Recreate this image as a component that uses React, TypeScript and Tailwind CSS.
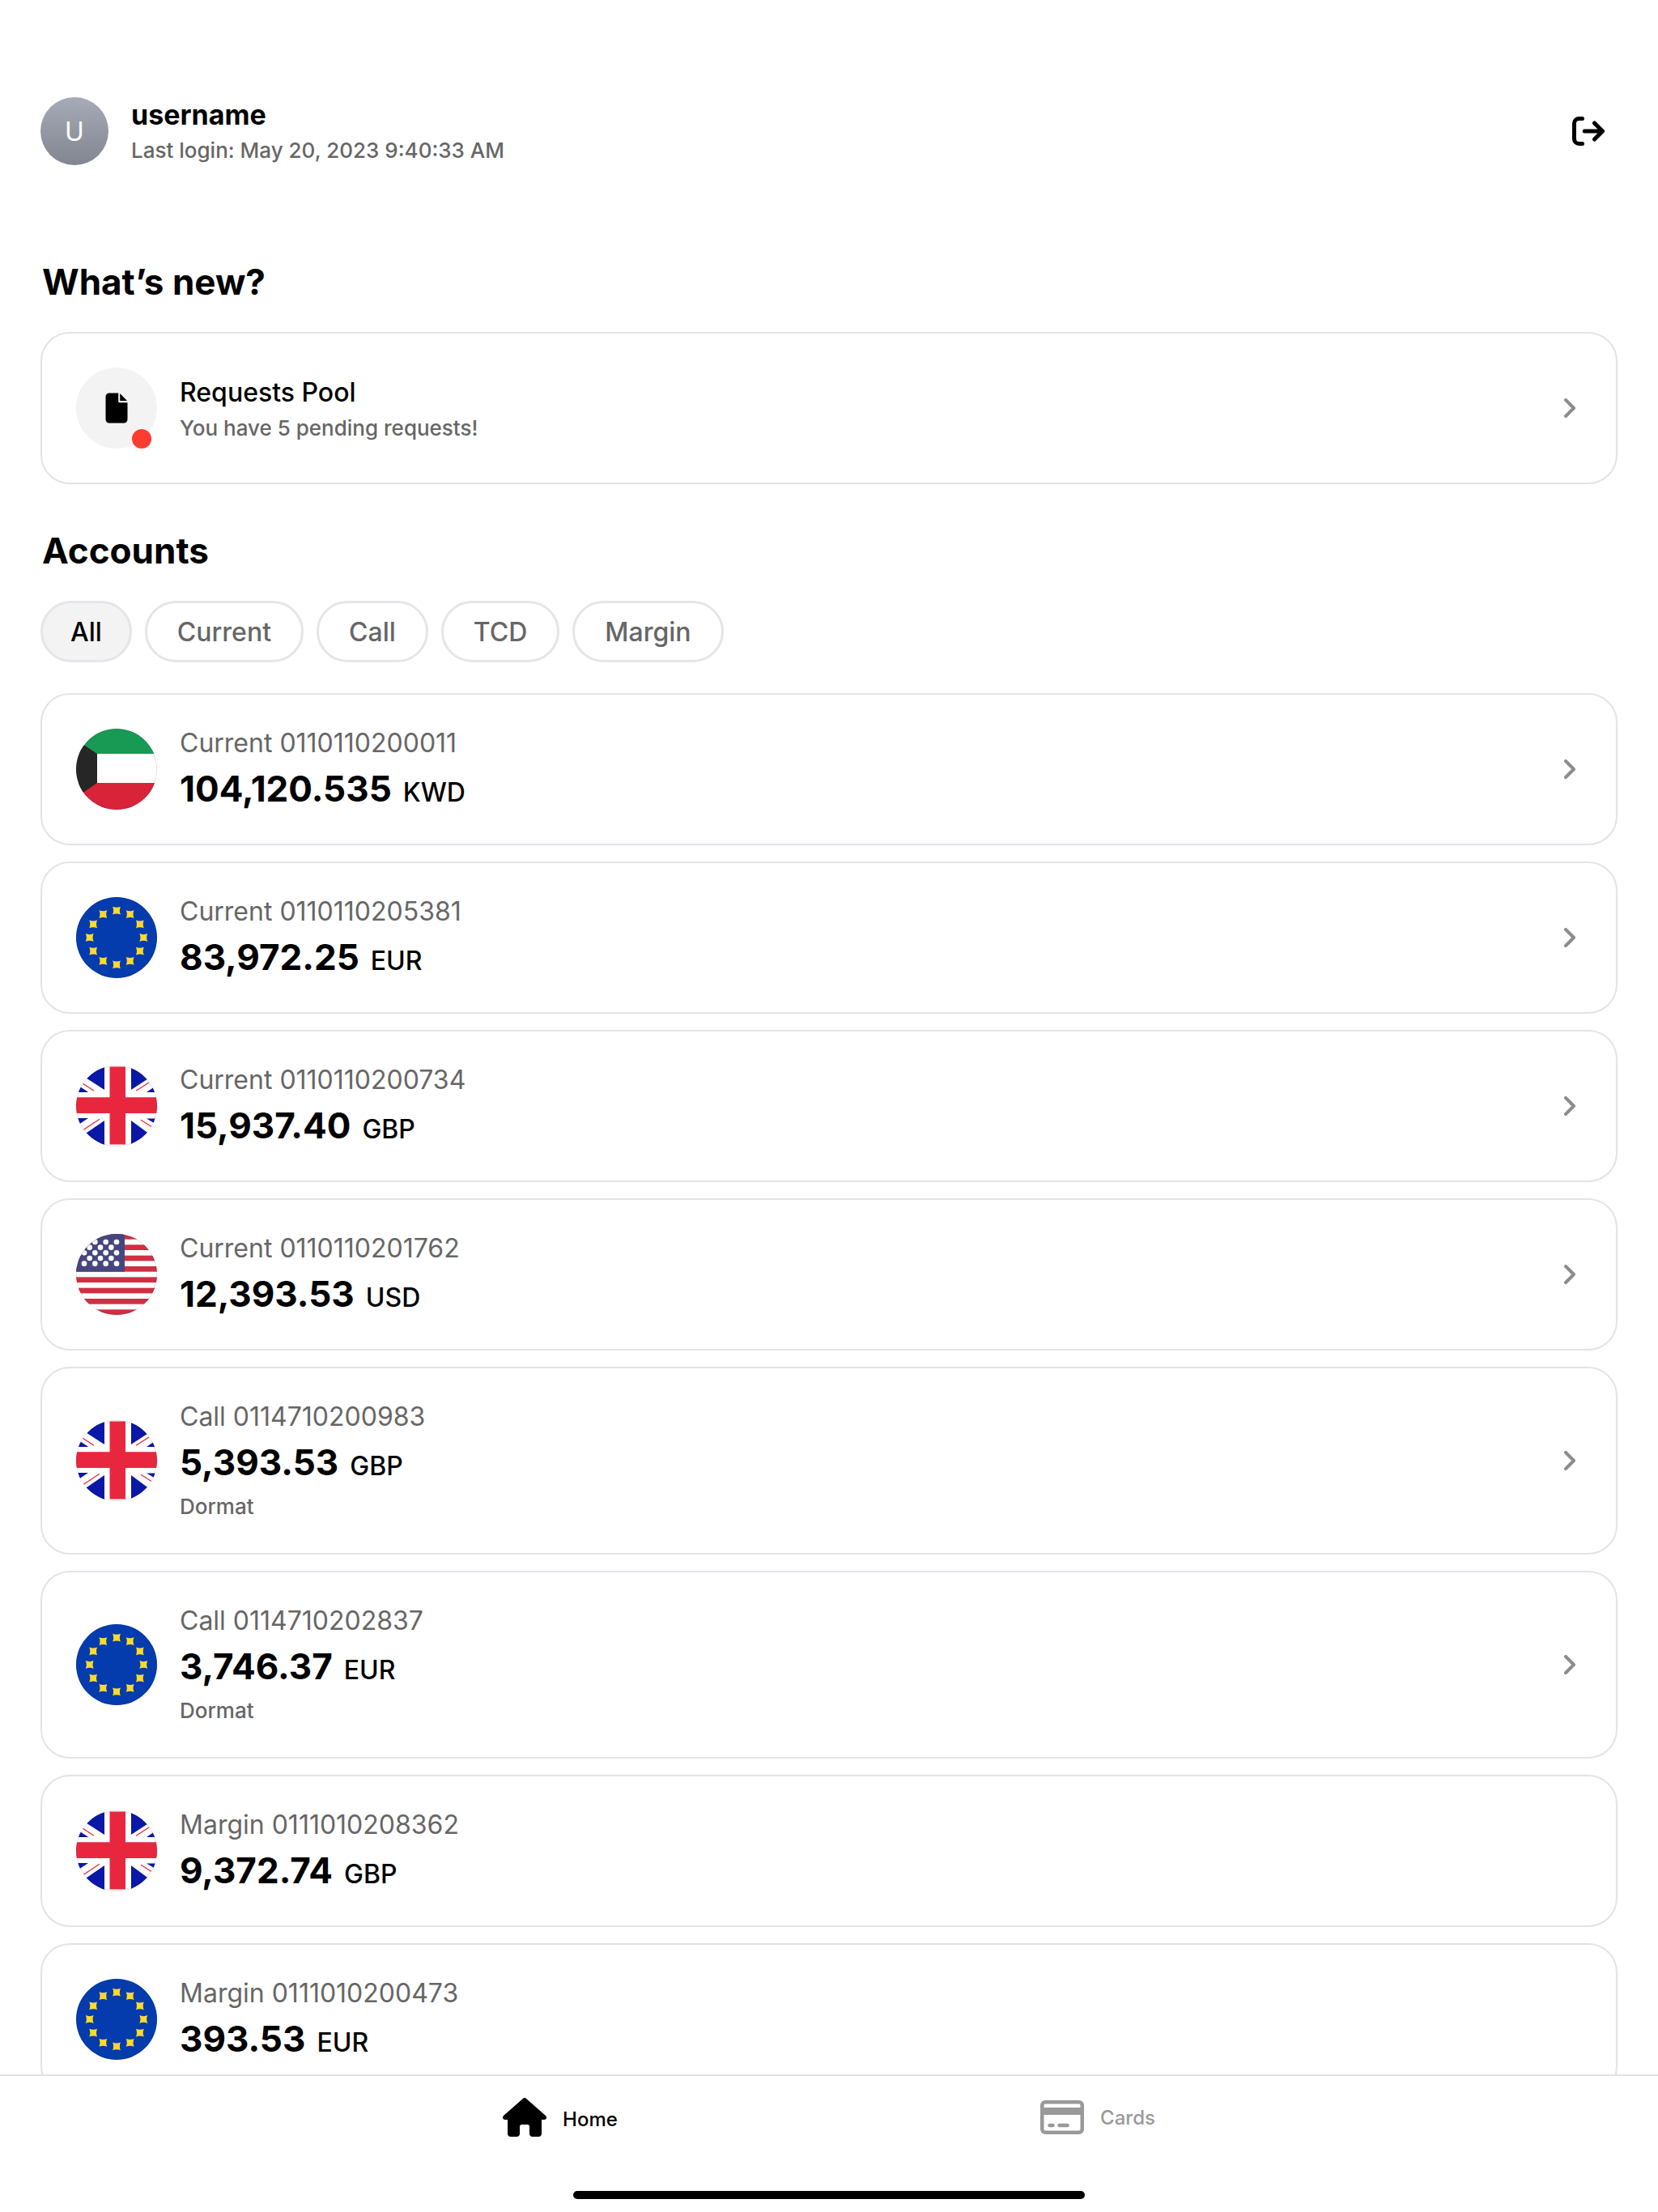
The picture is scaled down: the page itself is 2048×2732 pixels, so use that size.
import { useState, type ReactNode } from "react";

type FlagCode = "kw" | "eu" | "gb" | "us";

interface Account {
  kind: string;
  number: string;
  amount: string;
  currency: string;
  flag: FlagCode;
  note?: string;
  open: boolean;
}

const filters = ["All", "Current", "Call", "TCD", "Margin"];

const accounts: Account[] = [
  { kind: "Current", number: "0110110200011", amount: "104,120.535", currency: "KWD", flag: "kw", open: true },
  { kind: "Current", number: "0110110205381", amount: "83,972.25", currency: "EUR", flag: "eu", open: true },
  { kind: "Current", number: "0110110200734", amount: "15,937.40", currency: "GBP", flag: "gb", open: true },
  { kind: "Current", number: "0110110201762", amount: "12,393.53", currency: "USD", flag: "us", open: true },
  { kind: "Call", number: "0114710200983", amount: "5,393.53", currency: "GBP", flag: "gb", note: "Dormat", open: true },
  { kind: "Call", number: "0114710202837", amount: "3,746.37", currency: "EUR", flag: "eu", note: "Dormat", open: true },
  { kind: "Margin", number: "0111010208362", amount: "9,372.74", currency: "GBP", flag: "gb", open: false },
  { kind: "Margin", number: "0111010200473", amount: "393.53", currency: "EUR", flag: "eu", open: false },
];

function Kuwait() {
  return (
    <>
      <rect width="100" height="31" fill="#189a54" />
      <rect y="31" width="100" height="36" fill="#fff" />
      <rect y="67" width="100" height="33" fill="#d92339" />
      <path d="M0 13.5 26 31v36L0 85z" fill="#262626" />
    </>
  );
}

function Europe() {
  const stars = Array.from({ length: 12 }, (_, i) => {
    const a = (i * Math.PI) / 6;
    return { x: 50 + 33.3 * Math.sin(a), y: 50 - 33.3 * Math.cos(a) };
  });
  return (
    <>
      <rect width="100" height="100" fill="#043cae" />
      {stars.map((s, i) => (
        <path
          key={i}
          transform={`translate(${s.x} ${s.y})`}
          d="M-4.900-4.900Q0-2.800 4.900-4.900Q2.800 0 4.900 4.900Q0 2.800-4.900 4.900Q-2.800 0-4.900-4.900z"
          fill="#ffda2c"
        />
      ))}
    </>
  );
}

function Britain() {
  return (
    <>
      <rect width="100" height="100" fill="#fff" />
      <g fill="#0a17a7">
        <path d="M35 2v28L0 7.500V2z" />
        <path d="M68 2v28l35-23V2z" />
        <path d="M35 98V68L0 92v6z" />
        <path d="M68 98V68l35 26v4z" />
        <path d="M0 23v10h15.300z" />
        <path d="M103 22v11H87z" />
        <path d="M0 75V65h15z" />
        <path d="M103 75V65.500H87z" />
      </g>
      <path d="M41.500 1.500h19.500V39.300h39V59H61v38.500H41.500V59H0V39.300h41.500z" fill="#e8273f" />
      <path
        d="m8.300 22.300 13.700 9M74 31.300 90 21M29 66.300 9.300 79.300M80 67.300l12.700 8"
        stroke="#e8273f"
        strokeWidth="1.300"
      />
    </>
  );
}

function America() {
  const stripe = 100 / 15;
  const dots: { x: number; y: number }[] = [];
  for (let row = 0; row < 5; row++) {
    const odd = row % 2 === 1;
    for (let col = 0; col < (odd ? 3 : 4); col++) {
      dots.push({ x: 10 + col * 13.33 + (odd ? stripe : 0), y: 10 + row * stripe });
    }
  }
  return (
    <>
      <rect width="100" height="100" fill="#fff" />
      {Array.from({ length: 8 }, (_, i) => (
        <rect key={i} y={i * 2 * stripe} width="100" height={stripe} fill="#d02f44" />
      ))}
      <rect width="60" height="46.700" fill="#46467f" />
      {dots.map((d, i) => (
        <circle key={i} cx={d.x} cy={d.y} r="3.300" fill="#fff" />
      ))}
    </>
  );
}

const flags: Record<FlagCode, { label: string; art: () => ReactNode }> = {
  kw: { label: "Kuwait", art: Kuwait },
  eu: { label: "European Union", art: Europe },
  gb: { label: "United Kingdom", art: Britain },
  us: { label: "United States", art: America },
};

function Flag({ code }: { code: FlagCode }) {
  const { label, art: Art } = flags[code];
  return (
    <span className="size-[100px] shrink-0 overflow-hidden rounded-full">
      <svg viewBox="0 0 100 100" role="img" aria-label={label} className="size-full">
        <Art />
        <circle cx="50" cy="50" r="49.800" fill="none" stroke="#000" strokeOpacity="0.250" strokeWidth="0.600" />
      </svg>
    </span>
  );
}

function Chevron() {
  return (
    <svg viewBox="0 0 14 24" fill="none" aria-hidden="true" className="mr-2 ml-auto h-6 w-[14px] shrink-0">
      <path d="m2 2 10 10L2 22" stroke="#8c8c8c" strokeWidth="4" strokeLinecap="round" strokeLinejoin="round" />
    </svg>
  );
}

function LogoutIcon() {
  return (
    <svg viewBox="0 0 40 36" fill="none" stroke="#000" strokeLinecap="round" strokeLinejoin="round" aria-hidden="true" className="h-9 w-10">
      <path d="M12.500 2.600H8.500a6 6 0 0 0-6 6v18.800a6 6 0 0 0 6 6h4" strokeWidth="5" />
      <path d="M15.300 18H37M27.500 8 37.500 18l-10 10" strokeWidth="5" />
    </svg>
  );
}

function FileIcon() {
  return (
    <svg viewBox="0 0 28 38" aria-hidden="true" className="h-[38px] w-7">
      <path d="M5 .5h11.200v10.200a1.600 1.600 0 0 0 1.600 1.600H27.500V33a4.500 4.500 0 0 1-4.500 4.500H5A4.500 4.500 0 0 1 .5 33V5A4.500 4.500 0 0 1 5 .5z" />
      <path d="M18.200 1.200a2 2 0 0 1 .6.400l7.500 7.600a2 2 0 0 1 .500.800H18.200z" />
    </svg>
  );
}

function HomeIcon() {
  return (
    <svg viewBox="0 0 54 48" aria-hidden="true" className="h-12 w-[54px]">
      <path d="M25.200.700a2.700 2.700 0 0 1 3.600 0l24.200 21.400c2 1.900.9 5-1.700 5H48V44a4 4 0 0 1-4 4h-7a4 4 0 0 1-4-4v-8.500a2.500 2.500 0 0 0-2.500-2.500h-7a2.500 2.500 0 0 0-2.500 2.500V44a4 4 0 0 1-4 4h-7a4 4 0 0 1-4-4V27.100H2.700c-2.600 0-3.700-3.100-1.700-5z" />
    </svg>
  );
}

function CardIcon() {
  return (
    <svg viewBox="0 0 54 42" fill="none" stroke="#999" aria-hidden="true" className="h-[42px] w-[54px]">
      <rect x="2.250" y="2.250" width="49.500" height="37.500" rx="4" strokeWidth="4.500" />
      <path d="M2 13.500h50" strokeWidth="9" />
      <path d="M11.500 31h4M23.500 31h10" strokeWidth="4.500" strokeLinecap="round" />
    </svg>
  );
}

const cardClass = "flex w-full items-center gap-7 rounded-[36px] border-2 border-[#e3e3e8] bg-white px-[42px] text-left";

export default function App() {
  const [filter, setFilter] = useState("All");
  const shown = accounts.filter((a) => filter === "All" || a.kind === filter);

  return (
    <div className="flex h-screen flex-col overflow-hidden bg-white font-['Inter',sans-serif] text-black">
      <main className="flex min-h-0 flex-1 flex-col overflow-y-auto px-[50px] [scrollbar-width:none]">
        <header className="mt-[120px] flex h-[84px] shrink-0 items-center">
          <div className="flex size-[84px] shrink-0 items-center justify-center rounded-full bg-linear-to-b from-[#a5abb8] to-[#828690] pt-0.5 text-[32px] text-white">
            U
          </div>
          <div className="ml-7 pt-1">
            <p className="text-[34px] leading-[44px] font-bold">username</p>
            <p className="text-[26px] leading-[44px] font-medium text-[#666]">Last login: May 20, 2023 9:40:33 AM</p>
          </div>
          <button type="button" aria-label="Log out" className="mr-4 ml-auto">
            <LogoutIcon />
          </button>
        </header>

        <section className="mt-[116px] shrink-0">
          <h2 className="px-0.5 text-[44px] leading-[56px] font-bold">What’s new?</h2>
          <button type="button" className={`${cardClass} mt-[34px] h-[188px]`}>
            <span className="relative flex size-[100px] shrink-0 items-center justify-center rounded-full bg-[#f3f3f3]">
              <FileIcon />
              <span className="absolute right-[7px] bottom-0 size-6 rounded-full bg-[#ff3b30]" />
            </span>
            <span className="flex flex-col pt-1.5">
              <span className="text-[32px] leading-[44px] font-medium">Requests Pool</span>
              <span className="text-[26px] leading-[44px] font-medium text-[#666]">You have 5 pending requests!</span>
            </span>
            <Chevron />
          </button>
        </section>

        <section className="mt-[54px] shrink-0">
          <h2 className="px-0.5 text-[44px] leading-[56px] font-bold">Accounts</h2>
          <div className="mt-[34px] flex gap-4">
            {filters.map((f) => (
              <button
                key={f}
                type="button"
                aria-pressed={filter === f}
                onClick={() => setFilter(f)}
                className={`h-[76px] rounded-full border-[3px] border-[#e5e5ea] pt-0.5 text-[32px] leading-[40px] font-medium ${
                  filter === f ? "bg-[#f3f3f3] px-[34px] text-black" : "px-[37px] text-[#666]"
                }`}
              >
                {f}
              </button>
            ))}
          </div>
          <ul className="mt-[38px] flex flex-col gap-5 pb-10">
            {shown.map((a) => (
              <li key={a.number}>
                <button type="button" className={`${cardClass} ${a.note ? "h-[232px]" : "h-[188px]"}`}>
                  <Flag code={a.flag} />
                  <span className={`flex flex-col ${a.note ? "pb-1" : "pt-1"}`}>
                    <span className="text-[32px] leading-[48px] text-[#666]">
                      {a.kind} {a.number}
                    </span>
                    <span className="flex items-baseline gap-[14px] leading-[64px]">
                      <span className="text-[44px] font-bold">{a.amount}</span>
                      <span className="text-[32px] font-medium">{a.currency}</span>
                    </span>
                    {a.note && <span className="text-[26px] leading-[36px] font-medium text-[#666]">{a.note}</span>}
                  </span>
                  {a.open && <Chevron />}
                </button>
              </li>
            ))}
          </ul>
        </section>
      </main>

      <footer className="shrink-0 border-t-2 border-[#e2e2e2] bg-white">
        <nav className="mx-auto grid max-w-[1328px] grid-cols-2 pt-[27px]">
          <a href="#home" aria-current="page" className="flex h-12 items-center justify-center gap-5 text-[24px] leading-[32px] font-medium">
            <HomeIcon />
            <span className="pt-1.5">Home</span>
          </a>
          <a href="#cards" className="flex h-12 items-center justify-center gap-5 text-[24px] leading-[32px] font-medium text-[#999]">
            <CardIcon />
            <span className="pt-0.5">Cards</span>
          </a>
        </nav>
        <div className="mx-auto mt-[67px] mb-4 h-[10px] w-[632px] rounded-full bg-black" />
      </footer>
    </div>
  );
}
